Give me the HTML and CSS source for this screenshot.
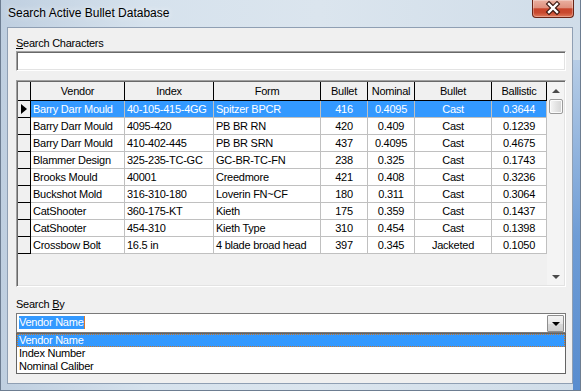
FILE: index.html
```html
<!DOCTYPE html>
<html lang="en">
<head>
  <meta charset="UTF-8">
  <title>Search Active Bullet Database</title>
  <meta name="viewport" content="width=device-width, initial-scale=1.0">
  <link rel="stylesheet" href="styles.css">
</head>
<body>
  <div class="window">
    <div class="titlebar">
      <span class="title">Search Active Bullet Database</span>
      <button class="close" title="Close">
        <svg width="40" height="17" viewBox="0 0 40 17">
          <path d="M16 4 L24 12 M24 4 L16 12" stroke="#3b1710" stroke-width="4.6" stroke-linecap="square" fill="none"/>
          <path d="M16 4 L24 12 M24 4 L16 12" stroke="#ffffff" stroke-width="2.4" stroke-linecap="square" fill="none"/>
        </svg>
      </button>
    </div>

    <div class="client">
      <label class="caption" for="searchChars"><u>S</u>earch Characters</label>
      <input type="text" id="searchChars" class="edit">

      <div class="grid">
        <div class="grid-body">
          <table>
            <thead>
              <tr>
                <th class="w-ind"></th>
                <th class="w-vendor">Vendor</th>
                <th class="w-index">Index</th>
                <th class="w-form">Form</th>
                <th class="w-weight">Bullet</th>
                <th class="w-nominal">Nominal</th>
                <th class="w-type">Bullet</th>
                <th class="w-bc">Ballistic</th>
              </tr>
            </thead>
            <tbody>
              <tr class="selected">
                <td class="ind"><span class="pointer"></span></td>
                <td>Barry Darr Mould</td><td>40-105-415-4GG</td><td>Spitzer BPCR</td>
                <td class="mid">416</td><td class="mid">0.4095</td><td class="mid">Cast</td><td class="mid">0.3644</td>
              </tr>
              <tr>
                <td class="ind"></td>
                <td>Barry Darr Mould</td><td>4095-420</td><td>PB BR RN</td>
                <td class="mid">420</td><td class="mid">0.409</td><td class="mid">Cast</td><td class="mid">0.1239</td>
              </tr>
              <tr>
                <td class="ind"></td>
                <td>Barry Darr Mould</td><td>410-402-445</td><td>PB BR SRN</td>
                <td class="mid">437</td><td class="mid">0.4095</td><td class="mid">Cast</td><td class="mid">0.4675</td>
              </tr>
              <tr>
                <td class="ind"></td>
                <td>Blammer Design</td><td>325-235-TC-GC</td><td>GC-BR-TC-FN</td>
                <td class="mid">238</td><td class="mid">0.325</td><td class="mid">Cast</td><td class="mid">0.1743</td>
              </tr>
              <tr>
                <td class="ind"></td>
                <td>Brooks Mould</td><td>40001</td><td>Creedmore</td>
                <td class="mid">421</td><td class="mid">0.408</td><td class="mid">Cast</td><td class="mid">0.3236</td>
              </tr>
              <tr>
                <td class="ind"></td>
                <td>Buckshot Mold</td><td>316-310-180</td><td>Loverin FN~CF</td>
                <td class="mid">180</td><td class="mid">0.311</td><td class="mid">Cast</td><td class="mid">0.3064</td>
              </tr>
              <tr>
                <td class="ind"></td>
                <td>CatShooter</td><td>360-175-KT</td><td>Kieth</td>
                <td class="mid">175</td><td class="mid">0.359</td><td class="mid">Cast</td><td class="mid">0.1437</td>
              </tr>
              <tr>
                <td class="ind"></td>
                <td>CatShooter</td><td>454-310</td><td>Kieth Type</td>
                <td class="mid">310</td><td class="mid">0.454</td><td class="mid">Cast</td><td class="mid">0.1398</td>
              </tr>
              <tr>
                <td class="ind"></td>
                <td>Crossbow Bolt</td><td>16.5 in</td><td>4 blade broad head</td>
                <td class="mid">397</td><td class="mid">0.345</td><td class="mid">Jacketed</td><td class="mid">0.1050</td>
              </tr>
            </tbody>
          </table>
        </div>
        <div class="vscroll">
          <div class="sb-btn"><span class="arrow-up"></span></div>
          <div class="sb-thumb"></div>
          <div class="sb-track"></div>
          <div class="sb-btn"><span class="arrow-down"></span></div>
        </div>
      </div>

      <label class="caption caption-by">Search <u>B</u>y</label>
      <div class="combo">
        <span class="combo-text"><span class="sel">Vendor Name</span></span>
        <span class="combo-btn"><span class="arrow-down dark"></span></span>
      </div>
      <ul class="droplist">
        <li class="current">Vendor Name</li>
        <li>Index Number</li>
        <li>Nominal Caliber</li>
      </ul>
    </div>
  </div>
</body>
</html>
```

FILE: styles.css
```css
html, body { margin: 0; padding: 0; }
body { width: 581px; height: 391px; overflow: hidden; font-family: "Liberation Sans", Arial, sans-serif; background: #cfdce8; }

.window {
  box-sizing: border-box; width: 581px; height: 391px;
  border: 1px solid #6d7d91; border-top: none;
  background:
    linear-gradient(to bottom, #b7cde6, #6f9dd6 45%, #4f86cc) right 0 top 60px / 7px 100% no-repeat,
    linear-gradient(to right, #bfcfe0 0%, #d6e2ed 25%, #dbe5ee 55%, #d0dde9 100%);
  display: flex; flex-direction: column;
}

.titlebar { display: flex; height: 27px; flex: none; }
.title { flex: 1; padding-left: 7px; line-height: 27px; font-size: 12px; color: #000; text-shadow: 0 0 6px rgba(255,255,255,0.9); }
.close {
  align-self: flex-start; margin: 0 6px 0 0; padding: 0; width: 42px; height: 18px; box-sizing: border-box;
  border: 1px solid #6a2416; border-top: none; border-radius: 0 0 4px 4px;
  background: linear-gradient(to bottom, #eab0a1 0%, #df917e 45%, #c8442b 52%, #c94a2f 75%, #e07a5c 100%);
  box-shadow: inset 0 0 0 1px rgba(255,255,255,0.3);
  display: block;
}
.close svg { display: block; }

.client {
  flex: none; box-sizing: border-box; height: 357px; margin: 0 7px 0 6px;
  border: 1px solid #8f9fb3; background: #f0f0f0;
  padding: 9px 6px 9px 8px;
  font-size: 11px; letter-spacing: -0.25px; color: #000;
}

.caption { display: block; line-height: 13px; margin-bottom: 1px; }
.caption-by { margin-top: 11px; margin-bottom: 2px; }

.edit {
  display: block; box-sizing: border-box; width: 550px; height: 20px; margin: 0;
  border: 1px solid; border-color: #a0a0a0 #ffffff #ffffff #a0a0a0; padding: 1px;
  box-shadow: inset 1px 1px 0 #696969, inset -1px -1px 0 #e3e3e3;
  background: #fff; font: inherit; outline: none;
}

.grid {
  display: flex; box-sizing: border-box; width: 550px; height: 207px; margin-top: 9px;
  border: 1px solid; border-color: #a0a0a0 #ffffff #ffffff #a0a0a0; padding: 1px;
  box-shadow: inset 1px 1px 0 #696969, inset -1px -1px 0 #e3e3e3;
  background: #f0f0f0;
}
.grid-body { width: 529px; flex: none; overflow: hidden; background: #f0f0f0; }

table { border-spacing: 0; table-layout: fixed; width: 529px; font: inherit; letter-spacing: inherit; }
th, td { box-sizing: border-box; padding: 0; white-space: nowrap; overflow: hidden; }
th { font-weight: normal; line-height: 18px; text-align: center; background: #f0f0f0; border-right: 1px solid #000; border-bottom: 1px solid #000; }
td { line-height: 16px; padding: 0 1px 0 2px; background: #fff; border-right: 1px solid #c0c0c0; border-bottom: 1px solid #c0c0c0; }
td.ind { background: #f0f0f0; border-right-color: #000; border-bottom-color: #000; padding: 0; text-align: center; }
td.mid { text-align: center; padding: 0; }
tr.selected td { background: #3399ff; color: #fff; }
tr.selected td.ind { background: #f0f0f0; }

.w-ind { width: 13px; }
.w-vendor { width: 94px; }
.w-index { width: 89px; }
.w-form { width: 107px; }
.w-weight { width: 47px; }
.w-nominal { width: 47px; }
.w-type { width: 77px; }
.w-bc { width: 55px; }

.pointer { display: inline-block; vertical-align: middle; width: 0; height: 0; border-left: 6px solid #000; border-top: 5px solid transparent; border-bottom: 5px solid transparent; margin-top: -2px; }

.vscroll { width: 17px; flex: none; display: flex; flex-direction: column; background: #f4f4f4; }
.sb-btn { height: 17px; flex: none; display: flex; align-items: center; justify-content: center; }
.sb-thumb {
  height: 15px; flex: none; margin: 0 1px 0 2px; box-sizing: border-box;
  border: 1px solid #9b9b9b; border-radius: 2px;
  background: linear-gradient(to right, #f6f6f6, #e4e4e4 50%, #d4d4d4);
  box-shadow: inset 0 0 0 1px #fbfbfb;
}
.sb-track { flex: 1; }

.arrow-up { width: 0; height: 0; border-left: 4px solid transparent; border-right: 4px solid transparent; border-bottom: 4px solid #4a4a4a; }
.arrow-down { width: 0; height: 0; border-left: 4px solid transparent; border-right: 4px solid transparent; border-top: 4px solid #4a4a4a; }
.arrow-down.dark { border-top-color: #000; border-left-width: 4px; border-right-width: 4px; }

.combo {
  display: flex; align-items: flex-start; box-sizing: border-box; width: 550px; height: 20px;
  border: 1px solid #7a7a7a; background: #fff;
}
.combo-text { flex: 1; padding: 2px 0 0 2px; line-height: 13px; }
.sel { background: #3399ff; color: #fff; display: inline-block; border-right: 1px solid #d9782a; padding-right: 0; }
.combo-btn {
  width: 17px; height: 17px; margin: 1px 1px 0 0; box-sizing: border-box;
  border: 1px solid #8e8e8e; border-radius: 1px;
  background: linear-gradient(to bottom, #f4f4f4, #e8e8e8 50%, #d9d9d9 51%, #cfcfcf);
  display: flex; align-items: center; justify-content: center;
}

.droplist {
  list-style: none; margin: 0; padding: 0; box-sizing: border-box; width: 550px;
  border: 1px solid #646464; background: #fff;
}
.droplist li { line-height: 13px; padding-left: 2px; }
.droplist li.current { background: #3399ff; color: #fff; outline: 1px dotted #c9782e; outline-offset: -1px; }
```
